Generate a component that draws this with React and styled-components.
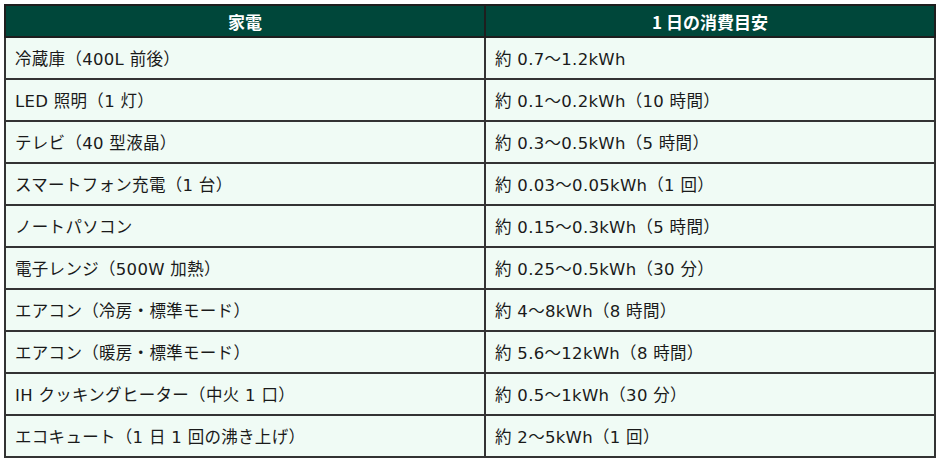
import React from 'react';
import styled, { createGlobalStyle } from 'styled-components';

const GlobalStyle = createGlobalStyle`
  body {
    margin: 0;
    background: #ffffff;
    font-family: "DejaVu Sans", "Noto Sans CJK JP", sans-serif;
  }
`;

const Wrap = styled.div`
  padding: 4px 6px 0 4px;
`;

const Table = styled.table`
  width: 930px;
  border-collapse: collapse;
  table-layout: fixed;
  font-size: 16.5px;
  color: #1a1a1a;
`;

const HeadCell = styled.th`
  background: #00473a;
  color: #ffffff;
  font-weight: bold;
  height: 30px;
  padding: 0;
  text-align: center;
  border: 2px solid #1e1e1e;
  font-family: "Noto Sans CJK JP", sans-serif;
  font-size: 17px;
`;

const Cell = styled.td`
  background: #f0fbf5;
  height: 40px;
  padding: 0 0 0 9px;
  border: 2px solid #333;
  white-space: nowrap;
  letter-spacing: 0.3px;
`;

const rows = [
  ['冷蔵庫（400L 前後）', '約 0.7～1.2kWh'],
  ['LED 照明（1 灯）', '約 0.1～0.2kWh（10 時間）'],
  ['テレビ（40 型液晶）', '約 0.3～0.5kWh（5 時間）'],
  ['スマートフォン充電（1 台）', '約 0.03～0.05kWh（1 回）'],
  ['ノートパソコン', '約 0.15～0.3kWh（5 時間）'],
  ['電子レンジ（500W 加熱）', '約 0.25～0.5kWh（30 分）'],
  ['エアコン（冷房・標準モード）', '約 4～8kWh（8 時間）'],
  ['エアコン（暖房・標準モード）', '約 5.6～12kWh（8 時間）'],
  ['IH クッキングヒーター（中火 1 口）', '約 0.5～1kWh（30 分）'],
  ['エコキュート（1 日 1 回の沸き上げ）', '約 2～5kWh（1 回）'],
];

export default function App() {
  return (
    <Wrap>
      <GlobalStyle />
      <Table>
        <colgroup>
          <col style={{ width: 480 }} />
          <col style={{ width: 450 }} />
        </colgroup>
        <thead>
          <tr>
            <HeadCell>家電</HeadCell>
            <HeadCell>1 日の消費目安</HeadCell>
          </tr>
        </thead>
        <tbody>
          {rows.map(([name, usage]) => (
            <tr key={name}>
              <Cell>{name}</Cell>
              <Cell>{usage}</Cell>
            </tr>
          ))}
        </tbody>
      </Table>
    </Wrap>
  );
}
